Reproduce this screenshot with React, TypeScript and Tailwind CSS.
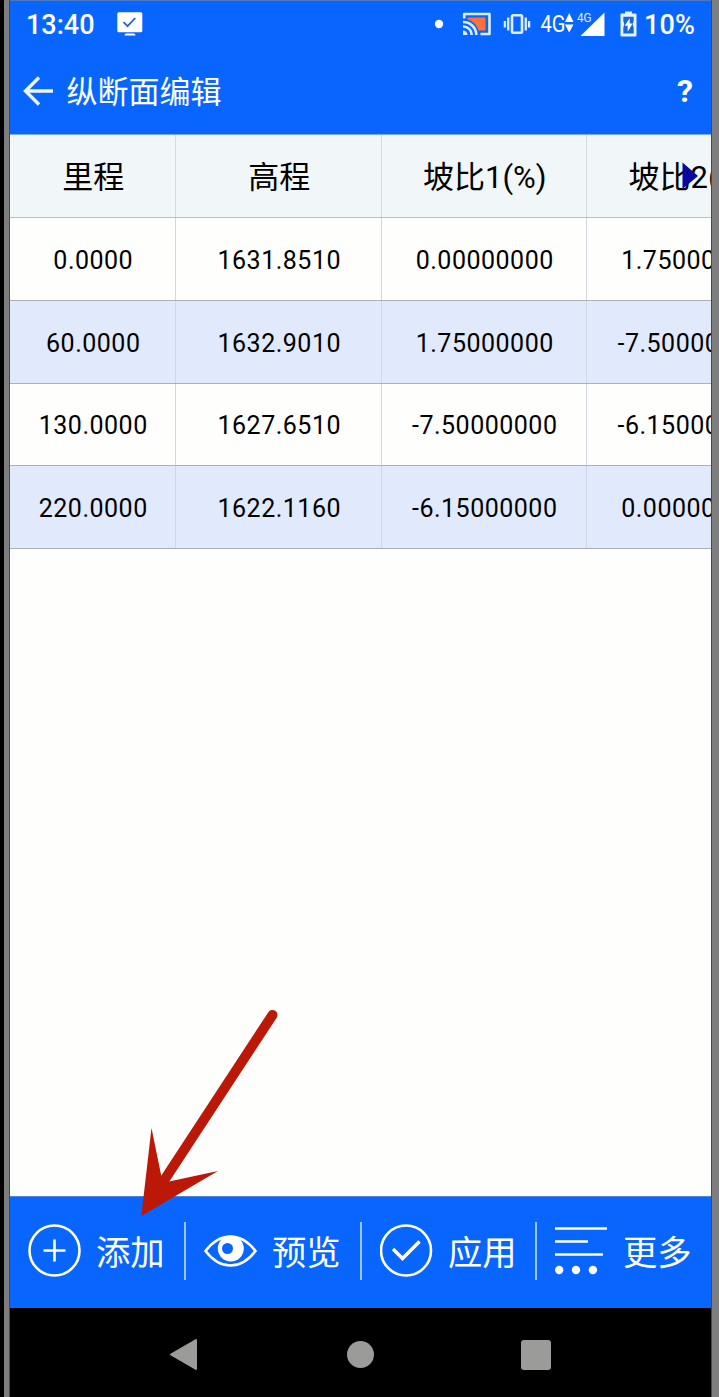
import React from 'react';

const columns = [
  { title: '里程', width: 'w-[166px]' },
  { title: '高程', width: 'w-[206px]' },
  { title: '坡比1(%)', width: 'w-[205px]' },
  { title: '坡比2(%)', width: 'w-[206px]' },
];

const rows = [
  ['0.0000', '1631.8510', '0.00000000', '1.75000000'],
  ['60.0000', '1632.9010', '1.75000000', '-7.50000000'],
  ['130.0000', '1627.6510', '-7.50000000', '-6.15000000'],
  ['220.0000', '1622.1160', '-6.15000000', '0.00000000'],
];

function StatusBar() {
  return (
    <div className="flex h-[48px] items-center text-[27px] font-medium leading-none">
      <span className="ml-4 w-[91px]">13:40</span>
      <svg className="-mt-[3px]" width="26" height="24" viewBox="0 0 26 24">
        <rect x="0.3" y="0.3" width="25" height="20" rx="1.5" fill="#fff" />
        <path d="M7.500 23.500c.5-2 1.500-2 2.500-2h6c1 0 2 0 2.500 2z" fill="#fff" />
        <path d="M6.500 10.200l4 4L18.300 6" fill="none" stroke="#2467c8" strokeWidth="1.800" />
      </svg>
      <svg className="-mt-0.5 ml-[291px]" width="10" height="10" viewBox="0 0 10 10">
        <circle cx="5" cy="5" r="4.200" fill="#fff" />
      </svg>
      <svg className="-mt-0.5 ml-[18px]" width="30" height="24" viewBox="0 0 30 24">
        <path d="M5.500 5.500H23.500v13h-7C15 13 11 9 5.500 7.500z" fill="#ff7138" />
        <path d="M2.200 6.500V2h25.300v20H18.500" fill="none" stroke="#dcefff" strokeWidth="2.600" strokeLinejoin="round" />
        <path d="M1 10A13 13 0 0 1 14.300 23M1 14.500a8.500 8.500 0 0 1 8.700 8.500" fill="none" stroke="#dcefff" strokeWidth="2.600" />
        <path d="M1 18.500A4.500 4.500 0 0 1 5.500 23H1z" fill="#dcefff" />
      </svg>
      <svg className="-mt-[3px] ml-[11px]" width="28" height="22" viewBox="0 0 28 22">
        <rect x="9" y="2.200" width="10" height="17.600" rx="1.200" fill="none" stroke="#dcefff" strokeWidth="2.600" />
        <path d="M5.200 4.500v13M1.900 8v6.500M22.800 4.500v13M26.100 8v6.500" stroke="#dcefff" strokeWidth="2.300" />
      </svg>
      <svg className="-mt-0.5 ml-[9px]" width="68" height="26" viewBox="0 0 68 26">
        <text x="0.500" y="20.500" fill="#fff" fontSize="23.500" textLength="25" lengthAdjust="spacingAndGlyphs" className="font-normal">4G</text>
        <path d="M25 11h8.500L29.200 2zM25 13.500h8.500l-4.300 8z" fill="#fff" />
        <text x="37" y="11" fill="#e4f0ff" fontSize="13" textLength="14.500" lengthAdjust="spacingAndGlyphs" className="font-normal">4G</text>
        <path d="M40.500 25L64.500 1.500V25z" fill="#fff" />
      </svg>
      <svg className="-mt-[3px] ml-[12px]" width="18" height="26" viewBox="0 0 18 26">
        <path d="M5 2.500V0.500h7v2h3.500q1 0 1 1v21q0 1-1 1h-14q-1 0-1-1v-21q0-1 1-1z" fill="#e4f3ff" />
        <path d="M3.300 5.700h10.400v4l-1 3.500 1 3.500V22.500H3.300v-5.800l1-3.500-1-3.500z" fill="#1766dc" />
        <path d="M9.800 7L4.800 14.800h2.900v6l4.900-8.200H9.600z" fill="#fff" />
      </svg>
      <span className="ml-[6px] tracking-[0.2px]">10%</span>
    </div>
  );
}

function TitleBar() {
  return (
    <div className="flex h-[84px] items-center">
      <svg className="ml-[13px]" width="31" height="30" viewBox="0 0 31 30">
        <path d="M30 15H2M16 1.500L2.500 15 16 28.500" fill="none" stroke="#eef7ff" strokeWidth="3.400" />
      </svg>
      <h1 className="ml-[12.500px] pt-0.5 text-[31px] leading-none">纵断面编辑</h1>
      <button className="ml-auto mr-[18px] text-[32px] font-bold leading-none">?</button>
    </div>
  );
}

function ProfileTable() {
  return (
    <div className="w-[783px] shrink-0 text-center text-black">
      <div className="flex h-[83px] border-b border-[#bcbfc1] bg-[#f1f6f8] text-[31px]">
        {columns.map((c) => (
          <div key={c.title} className={c.width + ' flex shrink-0 items-center justify-center border-r border-[#d5dadd] pl-[1.500px] pt-0.5 leading-none'}>
            {c.title}
          </div>
        ))}
      </div>
      {rows.map((r, n) => (
        <div
          key={r[0]}
          className={'flex h-[82.800px] border-b border-[#acb0b8] ' + (n % 2 ? 'bg-[#e1eafc]' : 'bg-[#fefefd]')}
        >
          {r.map((v, i) => (
            <div
              key={i}
              className={columns[i].width + ' flex shrink-0 items-center justify-center border-r border-[#d2d7df] pl-[1.500px] pt-[3px] text-[25px] leading-none tracking-[0.5px] whitespace-nowrap'}
            >
              {v}
            </div>
          ))}
        </div>
      ))}
    </div>
  );
}

const actions = [
  {
    label: '添加',
    icon: (
      <>
        <circle cx="26.500" cy="26.500" r="25" />
        <path d="M26.500 15.500v22M15.500 26.500h22" />
      </>
    ),
  },
  {
    label: '预览',
    icon: (
      <>
        <path d="M1.500 27C9.500 16.500 17.500 12.500 26.500 12.500S43.500 16.500 51.500 27C43.500 37.500 35.500 41.500 26.500 41.500S9.500 37.500 1.500 27z" />
        <circle cx="26.800" cy="24.500" r="13" fill="#fff" stroke="none" />
        <circle cx="23.500" cy="24.500" r="5.500" fill="#0866ff" stroke="none" />
      </>
    ),
  },
  {
    label: '应用',
    icon: (
      <>
        <circle cx="26" cy="26.500" r="25" />
        <path d="M13 25l9.500 9.500L39.500 17.500" strokeWidth="3.400" />
      </>
    ),
  },
  {
    label: '更多',
    icon: (
      <>
        <path d="M0 4.500h52M0 17.500h33M0 30.500h48" />
        <g fill="#fff" stroke="none">
          <circle cx="4.200" cy="46" r="4.200" />
          <circle cx="21" cy="46" r="4.200" />
          <circle cx="37.900" cy="46" r="4.200" />
        </g>
      </>
    ),
  },
];

function ActionBar() {
  return (
    <div className="grid h-[112px] shrink-0 grid-cols-[176px_176px_175px_174px] items-center border-t border-[#4f86d8] bg-[#0866ff] pb-[3px] text-white">
      {actions.map((a, i) => (
        <button
          key={a.label}
          className={'flex h-[58px] items-center pl-[17.500px] ' + (i < 3 ? 'border-r-2 border-[#9dc5ff]' : '')}
        >
          <svg className="shrink-0" width="54" height="54" viewBox="0 0 54 54" fill="none" stroke="#fff" strokeWidth="2.600">
            {a.icon}
          </svg>
          <span className="ml-[14.500px] whitespace-nowrap pt-1 text-[34.300px] leading-none">{a.label}</span>
        </button>
      ))}
    </div>
  );
}

function SystemNav() {
  return (
    <div className="flex h-[89px] shrink-0 items-center bg-black pt-1">
      <svg className="ml-[159px]" width="29" height="33" viewBox="0 0 29 33">
        <path d="M2 16.500L27 2v29z" fill="#9b9b99" stroke="#9b9b99" strokeWidth="2" strokeLinejoin="round" />
      </svg>
      <div className="ml-[149px] size-[27px] rounded-full bg-[#9b9b99]" />
      <div className="ml-[147px] size-[30px] rounded-[3px] bg-[#9b9b99]" />
    </div>
  );
}

export default function App() {
  return (
    <div className="relative flex h-[1397px] w-[719px] overflow-hidden bg-[#7e7e7e] font-['Roboto','Noto_Sans_CJK_SC',sans-serif]">
      <div className="w-1 shrink-0 bg-black" />
      <div className="w-[5px] shrink-0 bg-[#7e7e7e]" />
      <div className="flex w-[703px] shrink-0 flex-col overflow-hidden border-x border-[#46484c]">
        <header className="h-[135px] shrink-0 border-y border-t-[#4c78bf] border-b-[#7ea9e8] bg-[#0866ff] text-white">
          <StatusBar />
          <TitleBar />
        </header>
        <main className="flex-1 overflow-hidden bg-[#fefefd]">
          <ProfileTable />
        </main>
        <ActionBar />
        <SystemNav />
      </div>
      <svg className="absolute left-[680px] top-[161px]" width="20" height="30" viewBox="0 0 20 30">
        <path d="M2.500 1.500L18 15 2.500 28z" fill="#0808a0" />
      </svg>
      <svg className="absolute left-[130px] top-[1000px]" width="160" height="225" viewBox="130 1000 160 225">
        <path d="M272.500 1015L165 1179" stroke="#bb1808" strokeWidth="10" strokeLinecap="round" />
        <path d="M141.300 1216L151.500 1128 161.500 1177 169 1181.500 218 1171z" fill="#bb1808" />
      </svg>
    </div>
  );
}
